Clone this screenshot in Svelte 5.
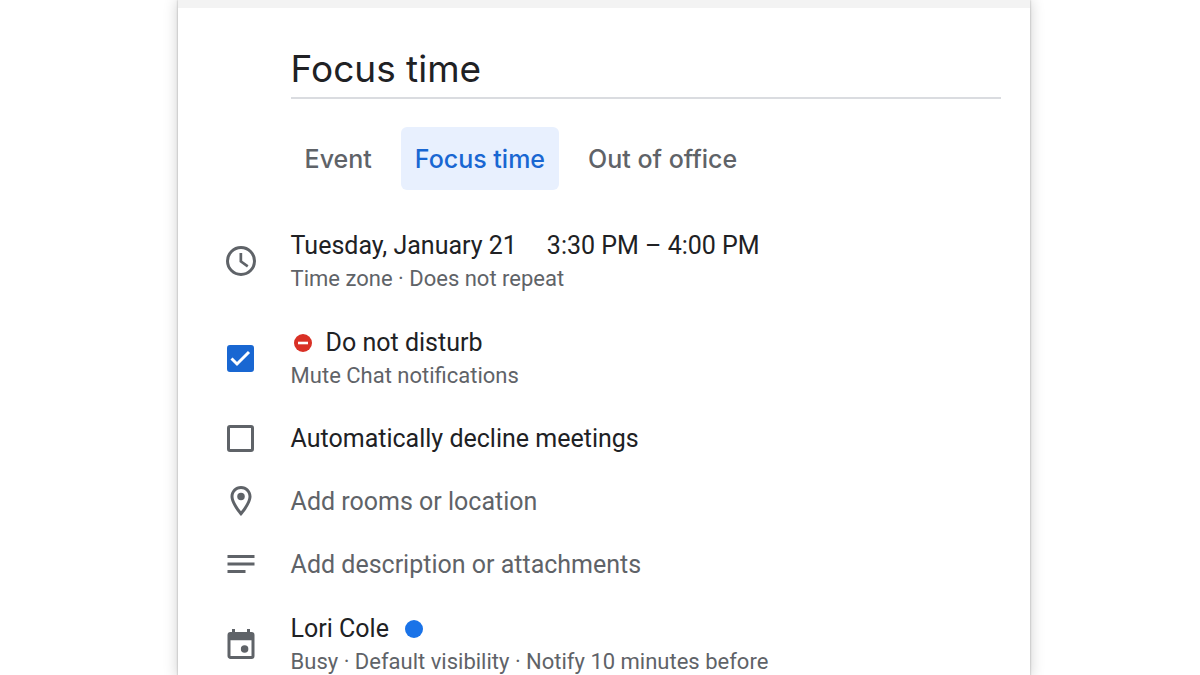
<script>
  const tabs = ['Event', 'Focus time', 'Out of office'];
  let title = $state('Focus time');
  let selected = $state('Focus time');
  let mute = $state(true);
  let decline = $state(false);
</script>

<main class="card">
  <div class="handle"></div>
  <form class="content">
    <input class="title" type="text" aria-label="Title" bind:value={title} />

    <div class="tabs" role="tablist">
      {#each tabs as tab}
        <button
          type="button"
          role="tab"
          class="tab"
          class:active={selected === tab}
          aria-selected={selected === tab}
          onclick={() => (selected = tab)}>{tab}</button>
      {/each}
    </div>

    <div class="rows">
      <div class="row">
        <svg class="icon" viewBox="0 0 24 24" aria-hidden="true">
          <circle cx="12" cy="12" r="9" fill="none" stroke="currentColor" stroke-width="2" />
          <path d="M11 6.6h1.8v5.2l4.2 3-1 1.5-5-3.6z" />
        </svg>
        <div class="pair">
          <div class="line when">
            <button type="button" class="plain">Tuesday, January 21</button>
            <button type="button" class="plain">3:30 PM – 4:00 PM</button>
          </div>
          <div class="note">Time zone · Does not repeat</div>
        </div>
      </div>

      <div class="row">
        <span class="tick"><input id="mute" type="checkbox" bind:checked={mute} /></span>
        <div class="pair">
          <label class="line dnd" for="mute">
            <svg class="stop" viewBox="0 0 18 18" aria-hidden="true">
              <circle cx="9" cy="9" r="9" fill="#d93025" />
              <path d="M4 7.7h10v2.6H4z" fill="#fff" />
            </svg>
            Do not disturb
          </label>
          <div class="note">Mute Chat notifications</div>
        </div>
      </div>

      <div class="row">
        <span class="tick"><input id="decline" type="checkbox" bind:checked={decline} /></span>
        <label class="line" for="decline">Automatically decline meetings</label>
      </div>

      <div class="row">
        <svg class="icon" viewBox="0 0 24 24" aria-hidden="true">
          <path d="M12 2C8.13 2 5 5.13 5 9c0 5.25 7 13 7 13s7-7.75 7-13c0-3.87-3.13-7-7-7zM7 9c0-2.76 2.24-5 5-5s5 2.24 5 5c0 2.88-2.88 7.19-5 9.88C9.92 16.21 7 11.85 7 9z" />
          <circle cx="12" cy="9" r="2.5" />
        </svg>
        <button type="button" class="plain line muted">Add rooms or location</button>
      </div>

      <div class="row">
        <svg class="icon" viewBox="0 0 24 24" aria-hidden="true">
          <path d="M3 6h18v2H3zM3 11h18v2H3zM3 16h12v2H3z" />
        </svg>
        <button type="button" class="plain line muted">Add description or attachments</button>
      </div>

      <div class="row">
        <svg class="icon" viewBox="0 0 24 24" aria-hidden="true">
          <path d="M19 4h-1V2h-2v2H8V2H6v2H5a2 2 0 0 0-2 2v14c0 1.1.9 2 2 2h14a2 2 0 0 0 2-2V6a2 2 0 0 0-2-2zm0 16H5V9.5h14z" />
          <circle cx="14.4" cy="15.4" r="2.5" />
        </svg>
        <div class="pair">
          <div class="line owner">Lori Cole <span class="dot"></span></div>
          <div class="note">Busy · Default visibility · Notify 10 minutes before</div>
        </div>
      </div>
    </div>
  </form>
</main>

<style>
  :global(body) {
    background: #fff;
  }
  :global(html) {
    scrollbar-width: none;
  }
  .card {
    box-sizing: border-box;
    width: 71%;
    min-height: 100vh;
    margin-left: 14.8%;
    background: #fff;
    color: #202124;
    font-family: Roboto, 'Liberation Sans', sans-serif;
    box-shadow: 0 0 2px rgba(0, 0, 0, 0.3), 0 0 14px rgba(0, 0, 0, 0.2);
  }
  .handle {
    height: 8px;
    background: #f3f3f3;
  }
  .content {
    padding: 32px 29px 0 45px;
  }
  .title {
    display: block;
    box-sizing: border-box;
    width: calc(100% - 68px);
    margin-left: 68px;
    padding: 2px 0;
    border: 0;
    border-bottom: 2px solid #dadce0;
    outline: 0;
    color: #202124;
    background: none;
    font: 400 37px/53px Inter, sans-serif;
  }
  .tabs {
    display: flex;
    gap: 15px;
    margin: 28px 0 37px 68px;
  }
  .tab {
    height: 63px;
    padding: 0 14px;
    border: 0;
    border-radius: 6px;
    background: none;
    color: #5f6368;
    font: 500 25px/32px Inter, sans-serif;
  }
  .tab.active {
    background: #e8f0fe;
    color: #1967d2;
  }
  .rows {
    display: flex;
    flex-direction: column;
    gap: 29px;
  }
  .row {
    display: flex;
    align-items: center;
    gap: 32px;
    color: #202124;
  }
  .pair {
    padding-top: 2px;
  }
  .icon,
  .tick {
    flex: none;
    width: 36px;
    height: 36px;
    margin: -1px 0;
    fill: currentColor;
    color: #5f6368;
  }
  .tick {
    display: grid;
    place-items: center;
  }
  .tick input {
    appearance: none;
    width: 27px;
    height: 27px;
    margin: 0;
    border: 3px solid #5f6368;
    border-radius: 3px;
  }
  .tick input:checked {
    border-color: #1967d2;
    background: #1967d2
      url("data:image/svg+xml,%3Csvg xmlns='http://www.w3.org/2000/svg' viewBox='0 0 21 21'%3E%3Cpath d='M1.5 10.5l5.5 5.5L19 4' fill='none' stroke='white' stroke-width='3'/%3E%3C/svg%3E")
      center / 21px no-repeat;
  }
  .line {
    font-size: 25px;
    line-height: 33px;
  }
  .note {
    color: #5f6368;
    font-size: 22px;
    line-height: 33px;
  }
  .plain {
    padding: 0;
    border: 0;
    background: none;
    color: inherit;
    font-family: inherit;
    font-size: 25px;
    line-height: 33px;
    text-align: left;
  }
  .plain.muted {
    color: #5f6368;
  }
  .when {
    display: flex;
    gap: 30px;
  }
  .dnd {
    display: flex;
    align-items: center;
    gap: 14px;
  }
  .stop {
    width: 18px;
    height: 18px;
    margin-left: 3px;
  }
  .owner {
    display: flex;
    align-items: center;
    gap: 16px;
  }
  .dot {
    width: 18px;
    height: 18px;
    border-radius: 50%;
    background: #1a73e8;
  }
</style>
